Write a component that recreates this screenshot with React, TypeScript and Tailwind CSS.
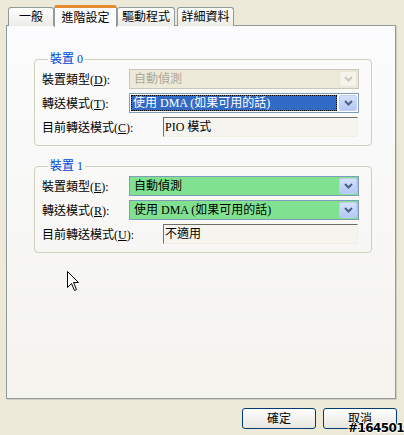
import React from "react";

const font = { fontFamily: '"Liberation Serif", "Noto Sans CJK TC", serif' };

const Chevron = ({ disabled }: { disabled?: boolean }) => (
  <svg width="9" height="6" viewBox="0 0 9 6">
    <path
      d="M1 1 L4.5 4.5 L8 1"
      fill="none"
      stroke={disabled ? "#C9C7BA" : "#4D6185"}
      strokeWidth="2"
    />
  </svg>
);

const Label = ({ text, k }: { text: string; k: string }) => (
  <span className="text-[12px] text-black leading-none">
    {text}(<u>{k}</u>):
  </span>
);

type ComboProps = { value: string; tone: "disabled" | "selected" | "green" };

const Combo = ({ value, tone }: ComboProps) => {
  const frame =
    tone === "disabled"
      ? "border-[#C9C7BA] bg-[#ECE9D8]"
      : tone === "selected"
      ? "border-[#7F9DB9] bg-white"
      : "border-[#7F9DB9] bg-[#80E290]";
  return (
    <div className={`flex w-[230px] h-[20px] border ${frame}`}>
      <div className="flex-1 flex items-center p-[1px]">
        {tone === "selected" ? (
          <div className="flex-1 h-full flex items-center bg-[#316AC5] text-white text-[12px] pl-[2px] outline-1 outline-dotted outline-[#000] -outline-offset-1">
            {value}
          </div>
        ) : (
          <span
            className={`pl-[3px] text-[12px] ${
              tone === "disabled" ? "text-[#ACA899]" : "text-black"
            }`}
          >
            {value}
          </span>
        )}
      </div>
      <div
        className={`w-[18px] m-[1px] flex items-center justify-center rounded-[2px] ${
          tone === "disabled"
            ? "bg-[#F5F4EA] border border-[#E8E6DC]"
            : "bg-linear-to-b from-[#D4E0FC] to-[#B4C8F6] border border-[#C0D0F2]"
        }`}
      >
        <Chevron disabled={tone === "disabled"} />
      </div>
    </div>
  );
};

const ReadOnly = ({ value }: { value: string }) => (
  <div className="w-[195px] h-[20px] flex items-center border border-t-[#716F64] border-l-[#716F64] border-r-[#F1EFE2] border-b-[#F1EFE2] bg-[#F5F4EF] text-[12px] text-black pl-[1px]">
    {value}
  </div>
);

const Device = ({
  title,
  rows,
}: {
  title: string;
  rows: { label: string; k: string; combo?: ComboProps; text?: string }[];
}) => (
  <fieldset className="w-[338px] border border-[#D0D0BF] rounded-[4px] pl-[7px] pb-[8px]">
    <legend className="ml-[6px] px-[2px] text-[12px] text-[#0046D5] leading-[14px]">{title}</legend>
    <div className="flex flex-col gap-[4px] mt-[3px]">
      {rows.map((r) => (
        <div key={r.label} className="flex items-center h-[20px]">
          <div className={r.text !== undefined ? "w-[121px]" : "w-[87px]"}>
            <Label text={r.label} k={r.k} />
          </div>
          {r.combo ? <Combo {...r.combo} /> : <ReadOnly value={r.text ?? ""} />}
        </div>
      ))}
    </div>
  </fieldset>
);

const Tab = ({ label, active, w }: { label: string; active?: boolean; w: string }) =>
  active ? (
    <div
      className={`${w} h-[22px] relative z-10 -mb-[1px] bg-[#FCFCFE] border-x border-[#919B9C] rounded-t-[3px] border-t-[3px] border-t-[#E68B2C] flex items-center justify-center text-[12px] text-black`}
    >
      {label}
    </div>
  ) : (
    <div
      className={`${w} h-[19px] bg-linear-to-b from-white to-[#ECEBE6] border border-b-0 border-[#919B9C] rounded-t-[3px] flex items-center justify-center text-[12px] text-black`}
    >
      {label}
    </div>
  );

export default function App() {
  return (
    <div className="relative w-[404px] h-[435px] bg-[#ECE9D8] overflow-hidden" style={font}>
      {/* Tabs */}
      <div className="flex items-end pt-[5px] pl-[8px] h-[26px]">
        <Tab label="一般" w="w-[46px]" />
        <Tab label="進階設定" w="w-[63px]" active />
        <Tab label="驅動程式" w="w-[58px]" />
        <div className="w-[2px]" />
        <Tab label="詳細資料" w="w-[57px]" />
      </div>

      {/* Page */}
      <div className="ml-[6px] w-[390px] h-[374px] -mt-[1px] border border-[#919B9C] shadow-[1px_1px_0_#D0CEBF] bg-linear-to-b from-[#FCFCFE] to-[#F4F3EE] pl-[27px] pt-[26px]">
        <Device
          title="裝置 0"
          rows={[
            { label: "裝置類型", k: "D", combo: { value: "自動偵測", tone: "disabled" } },
            { label: "轉送模式", k: "T", combo: { value: "使用 DMA (如果可用的話)", tone: "selected" } },
            { label: "目前轉送模式", k: "C", text: "PIO 模式" },
          ]}
        />
        <div className="h-[13px]" />
        <Device
          title="裝置 1"
          rows={[
            { label: "裝置類型", k: "E", combo: { value: "自動偵測", tone: "green" } },
            { label: "轉送模式", k: "R", combo: { value: "使用 DMA (如果可用的話)", tone: "green" } },
            { label: "目前轉送模式", k: "U", text: "不適用" },
          ]}
        />
      </div>

      {/* Buttons */}
      <div className="flex justify-end gap-[7px] pr-[7px] mt-[9px]">
        {["確定", "取消"].map((b) => (
          <button
            key={b}
            className="w-[74px] h-[21px] rounded-[3px] border border-[#003C74] bg-linear-to-b from-white to-[#E6E5DE] text-[12px] text-black flex items-center justify-center"
          >
            {b}
          </button>
        ))}
      </div>

      {/* Mouse cursor */}
      <svg className="absolute left-[67px] top-[271px]" width="13" height="21" viewBox="0 0 13 21">
        <path
          d="M0.5 0.5 L0.5 16.5 L4.5 12.5 L7.5 19.5 L9.5 18.5 L6.5 11.5 L11.5 11.5 Z"
          fill="white"
          stroke="black"
          strokeWidth="1"
        />
      </svg>

      {/* Watermark */}
      <div
        className="absolute right-[0px] bottom-[0px] text-[12px] leading-[14px] font-bold text-black tracking-[-0.6px]"
        style={{
          fontFamily: '"DejaVu Sans", sans-serif',
          textShadow:
            "1px 0 0 #fff, -1px 0 0 #fff, 0 1px 0 #fff, 0 -1px 0 #fff",
        }}
      >
        #164501
      </div>
    </div>
  );
}
